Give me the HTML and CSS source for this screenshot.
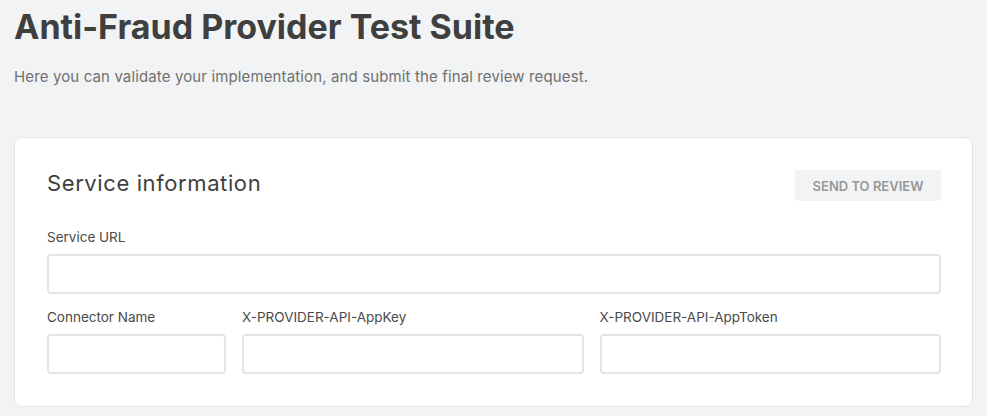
FILE: index.html
```html
<!DOCTYPE html>
<html>
<head>
<meta charset="utf-8">
<link rel="stylesheet" href="styles.css">
</head>
<body>
<div class="page">
  <h1 class="title">Anti-Fraud Provider Test Suite</h1>
  <p class="subtitle">Here you can validate your implementation, and submit the final review request.</p>
  <section class="card">
    <div class="card-head">
      <h2 class="card-title">Service information</h2>
      <button class="btn">SEND TO REVIEW</button>
    </div>
    <div class="field">
      <label class="label">Service URL</label>
      <input class="input" type="text">
    </div>
    <div class="row">
      <div class="field">
        <label class="label">Connector Name</label>
        <input class="input" type="text">
      </div>
      <div class="field">
        <label class="label">X-PROVIDER-API-AppKey</label>
        <input class="input" type="text">
      </div>
      <div class="field">
        <label class="label">X-PROVIDER-API-AppToken</label>
        <input class="input" type="text">
      </div>
    </div>
  </section>
</div>
</body>
</html>
```
FILE: styles.css
```css
* { box-sizing: border-box; }
html, body { margin: 0; padding: 0; }
body {
  background: #f2f3f5;
  font-family: Inter, "Liberation Sans", sans-serif;
  color: #3f3f40;
}
.page { padding: 7px 14px 0 14px; }
.title {
  margin: 0;
  font-size: 34px;
  line-height: 40px;
  font-weight: 700;
  color: #3f3f40;
  letter-spacing: 0;
}
.subtitle {
  margin: 20px 0 0 0;
  font-size: 15px;
  line-height: 20px;
  letter-spacing: 0.13px;
  color: #707070;
}
.card {
  margin-top: 50px;
  width: 959px;
  background: #fff;
  border: 1px solid #e3e4e6;
  border-radius: 8px;
  padding: 32px 31px 32px 32px;
}
.card-head {
  display: flex;
  justify-content: space-between;
  align-items: flex-start;
}
.card-title {
  margin: 0;
  font-size: 22px;
  line-height: 26px;
  font-weight: 400;
  letter-spacing: 0.6px;
  color: #3f3f40;
}
.btn {
  height: 31px;
  width: 146px;
  border: none;
  border-radius: 4px;
  background: #f2f3f5;
  color: #979899;
  font-family: inherit;
  font-weight: 600;
  font-size: 13px;
  padding: 0;
}
.field { display: flex; flex-direction: column; }
.card-head + .field { margin-top: 26px; }
.label {
  font-size: 13.5px;
  line-height: 20px;
  color: #4a4a4a;
  margin-bottom: 7px;
}
.input {
  height: 40px;
  border: 2px solid #e3e4e6;
  border-radius: 4px;
  background: #fff;
  width: 100%;
}
.row {
  margin-top: 13px;
  display: grid;
  grid-template-columns: 179px 1fr 1fr;
  gap: 16px;
}
```
